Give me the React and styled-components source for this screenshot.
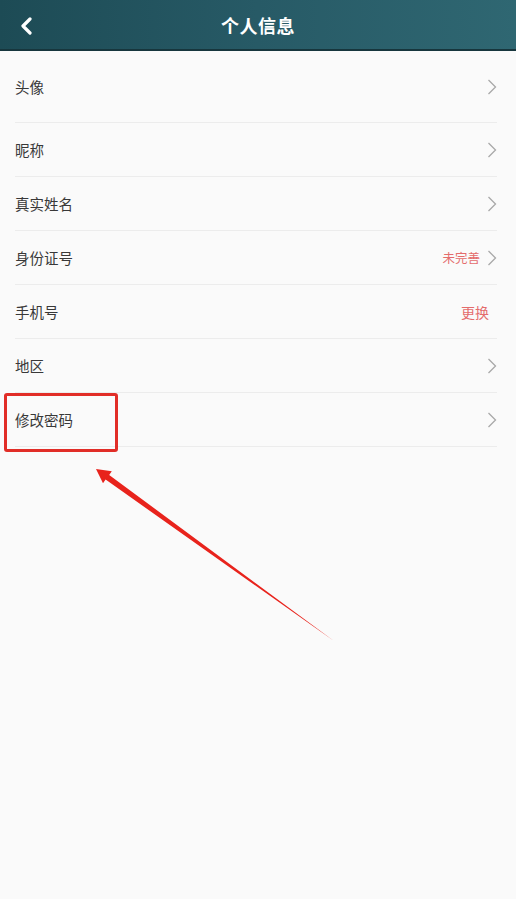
import React from "react";
import styled, { createGlobalStyle } from "styled-components";

const Global = createGlobalStyle`
  html, body { margin: 0; padding: 0; background: #fafafa; }
  body { font-family: "Noto Sans CJK SC", "Noto Sans", sans-serif; }
  * { box-sizing: border-box; }
`;

const Page = styled.div`
  position: relative;
  width: 516px;
  height: 899px;
  background: #fafafa;
  overflow: hidden;
`;

const Header = styled.header`
  height: 51px;
  display: flex;
  align-items: center;
  justify-content: center;
  position: relative;
  background: linear-gradient(90deg, #1d4b55 0%, #275a66 50%, #2f6772 100%);
  border-bottom: 2px solid #17363d;
`;

const BackButton = styled.div`
  position: absolute;
  left: 17px;
  top: 16px;
  width: 18px;
  height: 20px;
  display: flex;
  align-items: center;
  justify-content: center;
`;

const Title = styled.h1`
  margin: 0;
  font-size: 18px;
  font-weight: 700;
  color: #ffffff;
  letter-spacing: 0.5px;
`;

const List = styled.div`
  display: flex;
  flex-direction: column;
  padding-left: 15px;
  padding-right: 19px;
`;

const Row = styled.div`
  height: ${(p) => p.$h}px;
  display: flex;
  align-items: center;
  justify-content: space-between;
  border-bottom: 1px solid #ececec;
`;

const Label = styled.span`
  font-size: 14.5px;
  color: #383838;
`;

const Right = styled.div`
  display: flex;
  align-items: center;
  gap: 7px;
`;

const Hint = styled.span`
  font-size: ${(p) => p.$size}px;
  color: #e46c6c;
  margin-right: ${(p) => p.$mr}px;
`;

const Highlight = styled.div`
  position: absolute;
  left: 4px;
  top: 393px;
  width: 114px;
  height: 59px;
  border: 3px solid #e12d27;
  border-radius: 3px;
`;

const ArrowSvg = styled.svg`
  position: absolute;
  left: 0;
  top: 0;
  pointer-events: none;
`;

const Chevron = () => (
  <svg width="10" height="16" viewBox="0 0 10 16">
    <path d="M1.5 1 L8.5 8 L1.5 15" fill="none" stroke="#a8a8a8" strokeWidth="1.3" />
  </svg>
);

const rows = [
  { label: "头像", h: 72 },
  { label: "昵称", h: 54 },
  { label: "真实姓名", h: 54 },
  { label: "身份证号", h: 54, hint: "未完善", size: 12.5, mr: 0 },
  { label: "手机号", h: 54, hint: "更换", size: 14, mr: 8, noChevron: true },
  { label: "地区", h: 54 },
  { label: "修改密码", h: 54 },
];

export default function App() {
  return (
    <Page>
      <Global />
      <Header>
        <BackButton>
          <svg width="14" height="18" viewBox="0 0 14 18">
            <path d="M11 2 L4 9 L11 16" fill="none" stroke="#ffffff" strokeWidth="3.2" strokeLinecap="round" strokeLinejoin="round" />
          </svg>
        </BackButton>
        <Title>个人信息</Title>
      </Header>
      <List>
        {rows.map((r) => (
          <Row key={r.label} $h={r.h}>
            <Label>{r.label}</Label>
            <Right>
              {r.hint && (
                <Hint $size={r.size} $mr={r.mr}>
                  {r.hint}
                </Hint>
              )}
              {!r.noChevron && <Chevron />}
            </Right>
          </Row>
        ))}
      </List>
      <Highlight />
      <ArrowSvg width="516" height="899" viewBox="0 0 516 899">
        <polygon
          points="96,469 111.8,471.2 109.2,475 334,641 105.6,479.6 103,483.2"
          fill="#e8231c"
        />
      </ArrowSvg>
    </Page>
  );
}
